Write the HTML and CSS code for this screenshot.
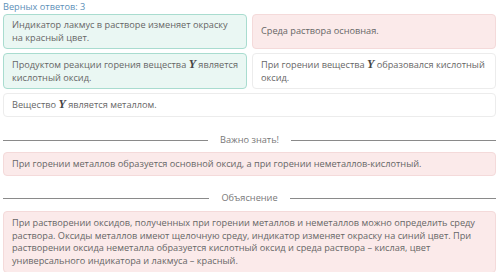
FILE: index.html
```html
<!DOCTYPE html>
<html>
<head>
<meta charset="utf-8">
<link rel="stylesheet" href="styles.css">
</head>
<body>
<div class="page">
  <div class="score">Верных ответов: 3</div>

  <div class="answers">
    <div class="card right"><p>Индикатор лакмус в растворе изменяет окраску на красный цвет.</p></div>
    <div class="card wrong"><p>Среда раствора основная.</p></div>
    <div class="card right"><p>Продуктом реакции горения вещества <i class="math">Y</i> является кислотный оксид.</p></div>
    <div class="card"><p>При горении вещества <i class="math">Y</i> образовался кислотный оксид.</p></div>
    <div class="card wide"><p>Вещество <i class="math">Y</i> является металлом.</p></div>
  </div>

  <div class="divider first"><span>Важно знать!</span></div>
  <div class="note">При горении металлов образуется основной оксид, а при горении неметаллов-кислотный.</div>

  <div class="divider"><span>Объяснение</span></div>
  <div class="note">При растворении оксидов, полученных при горении металлов и неметаллов можно определить среду раствора. Оксиды металлов имеют щелочную среду, индикатор изменяет окраску на синий цвет. При растворении оксида неметалла образуется кислотный оксид и среда раствора – кислая, цвет универсального индикатора и лакмуса – красный.</div>
</div>
</body>
</html>
```

FILE: styles.css
```css
body {
  margin: 0;
  background: #fff;
  font-family: "Open Sans", "Noto Sans", sans-serif;
  font-size: 9.2px;
  line-height: 12.5px;
  color: #666;
}

.page {
  padding: 0 4px 0 3px;
}

.score {
  color: #5d8fb8;
  height: 13px;
  line-height: 13px;
  margin-bottom: 1px;
}

.answers {
  display: grid;
  grid-template-columns: 1fr 1fr;
  gap: 4px 5px;
}

.card {
  border: 1px solid #ececec;
  border-radius: 4px;
  background: #fff;
  padding: 4px 6px 4px 8px;
  min-height: 25px;
  display: flex;
  align-items: center;
}

.card p {
  margin: 0;
}

.card.right {
  background: #eaf7f3;
  border-color: #a9dccf;
}

.card.wrong {
  background: #fbeaea;
  border-color: #f4dada;
}

.card.wide {
  grid-column: 1 / 3;
  min-height: 12px;
}

.math {
  font-family: "Liberation Serif", "DejaVu Serif", serif;
  font-weight: bold;
  font-size: 12px;
  line-height: 1;
  color: #444;
}

.divider {
  display: flex;
  align-items: center;
  gap: 12px;
  color: #777;
  height: 13px;
  margin: 16px 0 6px;
}

.divider.first {
  margin-top: 17px;
  margin-bottom: 5px;
}

.divider::before,
.divider::after {
  content: "";
  flex: 1;
  border-top: 1px solid #8a8a8a;
}

.note {
  background: #fbeaea;
  border: 1px solid #f4dada;
  border-radius: 4px;
  padding: 5px 8px;
}
```
